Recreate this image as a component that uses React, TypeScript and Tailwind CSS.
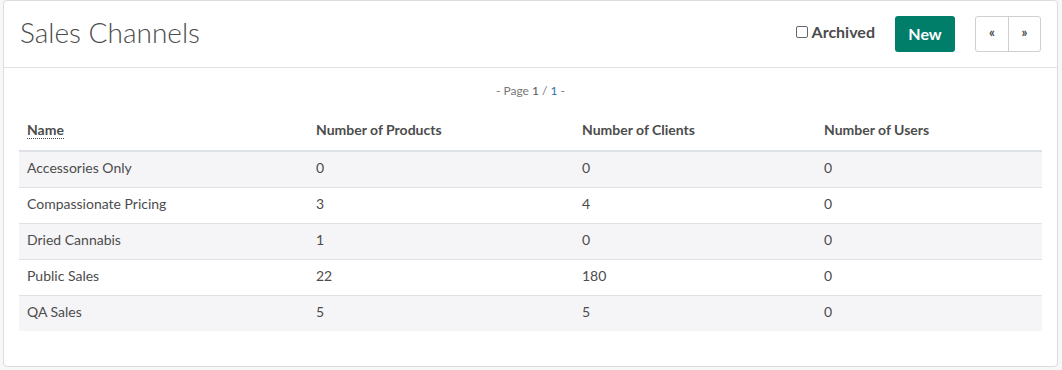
import React from "react";

const rows = [
  ["Accessories Only", "0", "0", "0"],
  ["Compassionate Pricing", "3", "4", "0"],
  ["Dried Cannabis", "1", "0", "0"],
  ["Public Sales", "22", "180", "0"],
  ["QA Sales", "5", "5", "0"],
];

export default function App() {
  return (
    <div
      className="w-[1062px] h-[370px] bg-[#f7f7f8] pl-[3px] pr-[4px] pb-[3px] text-[#4c4c4c]"
      style={{ fontFamily: "Lato, 'Open Sans', sans-serif" }}
    >
      <div className="h-full bg-white border border-[#dcdcdc] rounded-[4px] flex flex-col">
        <div className="h-[67px] border-b border-[#dee2e6] flex items-center pl-[16px] pr-[16px] shrink-0">
          <h1 className="text-[28px] font-light text-[#4c4c4c] leading-none pb-[5px]">Sales Channels</h1>
          <div className="ml-auto flex items-center">
            <label className="flex items-center gap-[4px] mr-[20px] mb-[4px]">
              <span className="w-[12px] h-[12px] border border-[#666] rounded-[2px] bg-white" />
              <span className="text-[16px] font-bold text-[#4c4c4c]">Archived</span>
            </label>
            <button className="h-[36px] w-[60px] rounded-[3px] bg-[#017e69] text-white text-[16px] font-bold">
              New
            </button>
            <div className="ml-[20px] flex h-[36px] border border-[#cfcfcf] rounded-[3px]">
              <button className="w-[33px] text-[13px] font-bold text-[#444] border-r border-[#cfcfcf] pb-[3px]">«</button>
              <button className="w-[31px] text-[13px] font-bold text-[#444] pb-[3px]">»</button>
            </div>
          </div>
        </div>
        <div className="px-[15px] pt-[15px]">
          <div className="text-center text-[12px] text-[#777] leading-[16px]">
            - Page <span className="text-[#555]">1</span> / <span className="text-[#2f6fa0]">1</span> -
          </div>
          <table className="w-full mt-[10px] text-[14px] border-collapse">
            <thead>
              <tr className="h-[42px] border-b-2 border-[#dee2e6]">
                <th className="w-[289px] text-left font-bold pl-[8px] pt-[1px] pb-[1px]">
                  <span className="border-b border-dotted border-[#4c4c4c]">Name</span>
                </th>
                <th className="w-[266px] text-left font-bold pl-[8px] pt-[1px] pb-[1px]">Number of Products</th>
                <th className="w-[242px] text-left font-bold pl-[8px] pt-[1px] pb-[1px]">Number of Clients</th>
                <th className="text-left font-bold pl-[8px] pt-[1px] pb-[1px]">Number of Users</th>
              </tr>
            </thead>
            <tbody>
              {rows.map((r, i) => (
                <tr
                  key={i}
                  className={`h-[36px] ${i % 2 === 0 ? "bg-[#f5f5f7]" : "bg-white"} ${
                    i < rows.length - 1 ? "border-b border-[#dee2e6]" : ""
                  }`}
                >
                  {r.map((c, j) => (
                    <td key={j} className="pl-[8px] pb-[4px] text-[#4c4c4c]">
                      {c}
                    </td>
                  ))}
                </tr>
              ))}
            </tbody>
          </table>
        </div>
      </div>
    </div>
  );
}
